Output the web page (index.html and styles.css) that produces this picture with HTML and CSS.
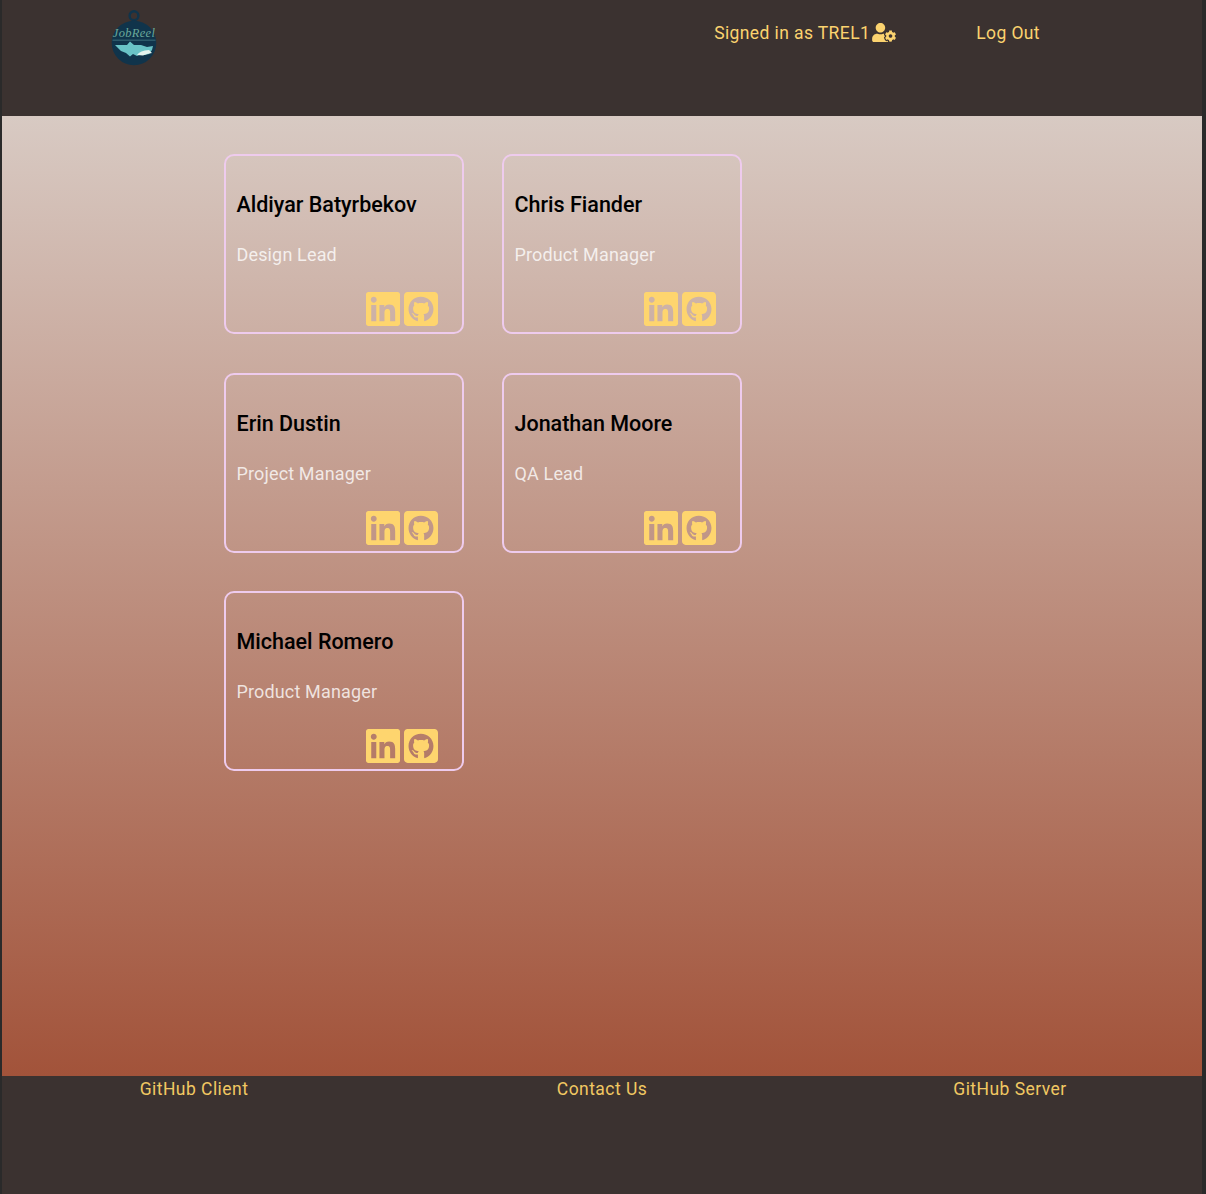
FILE: index.html
```html
<!DOCTYPE html>
<html lang="en">
<head>
<meta charset="utf-8">
<title>JobReel - Team</title>
<link rel="stylesheet" href="styles.css">
</head>
<body>
<svg class="defs" width="0" height="0">
    <symbol id="icon-linkedin" viewBox="0 32 448 448">
        <path d="M416 32H31.9C14.3 32 0 46.5 0 64.3v383.4C0 465.5 14.3 480 31.9 480H416c17.6 0 32-14.5 32-32.3V64.3c0-17.8-14.4-32.3-32-32.3zM135.4 416H69V202.2h66.5V416zm-33.2-243c-21.3 0-38.5-17.3-38.5-38.5S80.9 96 102.2 96c21.2 0 38.5 17.3 38.5 38.5 0 21.3-17.2 38.5-38.5 38.5zm282.1 243h-66.4V312c0-24.8-.5-56.7-34.5-56.7-34.6 0-39.9 27-39.9 54.9V416h-66.4V202.2h63.7v29.2h.9c8.9-16.8 30.6-34.5 62.9-34.5 67.2 0 79.7 44.3 79.7 101.9V416z"/>
    </symbol>
    <symbol id="icon-github" viewBox="0 32 448 448">
        <path d="M400 32H48C21.5 32 0 53.5 0 80v352c0 26.5 21.5 48 48 48h352c26.5 0 48-21.5 48-48V80c0-26.5-21.5-48-48-48zM277.3 415.7c-8.4 1.5-11.5-3.7-11.5-8 0-5.4.2-33 .2-55.3 0-15.6-5.2-25.5-11.3-30.7 37-4.1 76-9.2 76-73.1 0-18.2-6.5-27.3-17.1-39 1.7-4.3 7.4-22-1.7-45-13.9-4.3-45.7 17.9-45.7 17.9-13.2-3.7-27.5-5.6-41.6-5.6-14.1 0-28.4 1.9-41.6 5.6 0 0-31.8-22.2-45.7-17.9-9.1 22.9-3.5 40.6-1.7 45-10.6 11.7-15.6 20.8-15.6 39 0 63.6 37.3 69 74.3 73.1-4.8 4.3-9.1 11.7-10.6 22.3-9.5 4.3-33.8 11.7-48.3-13.9-9.1-15.8-25.5-17.1-25.5-17.1-16.2-.2-1.1 10.2-1.1 10.2 10.8 5 18.4 24.2 18.4 24.2 9.7 29.7 56.1 19.7 56.1 19.7 0 13.9.2 36.5.2 40.6 0 4.3-3 9.5-11.5 8-66-22.1-112.2-84.9-112.2-158.3 0-91.8 70.2-161.5 162-161.5S388 165.6 388 257.4c.1 73.4-44.7 136.3-110.7 158.3z"/>
    </symbol>
</svg>

<div class="page">
    <header class="topbar">
        <svg class="logo" width="46" height="56" viewBox="0 0 46 56">
            <circle class="logo-ring" cx="23" cy="5.700" r="4.400"/>
            <circle class="logo-ball" cx="23" cy="33" r="22.300"/>
            <text class="logo-text" x="23" y="26.500" text-anchor="middle">JobReel</text>
            <path class="logo-bar" d="M1.500 29.500h43v1.400h-43z"/>
            <path class="logo-shark" d="M4 35h12l3-3.500 4 3.500h7l6 2 6-1-1 4-3 4-4 1-4-1-4 2-4-2-3 2.500-4-3.500-5-2z"/>
            <path class="logo-wave" d="M26 45c2-3 6-4.500 12-5l3 3-5 1-4 1.500z"/>
        </svg>
        <nav class="topbar-links">
            <a class="signed-in">Signed in as TREL1
                <svg class="user-cog" width="24" height="19" viewBox="0 0 640 512"><path d="M610.5 373.300c2.600-14.100 2.600-28.500 0-42.600l25.800-14.900c3-1.700 4.300-5.200 3.300-8.500-6.700-21.600-18.200-41.200-33.200-57.400-2.300-2.500-6-3.100-9-1.400l-25.800 14.900c-10.900-9.300-23.400-16.500-36.900-21.300v-29.800c0-3.400-2.400-6.400-5.700-7.100-22.300-5-45-4.800-66.200 0-3.300.7-5.700 3.700-5.700 7.100v29.800c-13.500 4.800-26 12-36.900 21.300l-25.800-14.900c-2.900-1.700-6.700-1.100-9 1.400-15 16.200-26.500 35.800-33.200 57.400-1 3.300.4 6.800 3.300 8.500l25.800 14.900c-2.600 14.100-2.600 28.500 0 42.600l-25.800 14.900c-3 1.700-4.300 5.200-3.300 8.500 6.700 21.600 18.200 41.100 33.200 57.400 2.300 2.500 6 3.100 9 1.400l25.800-14.900c10.900 9.300 23.400 16.500 36.900 21.300v29.800c0 3.400 2.400 6.400 5.700 7.100 22.300 5 45 4.800 66.200 0 3.300-.7 5.700-3.700 5.700-7.100v-29.800c13.500-4.800 26-12 36.900-21.300l25.800 14.900c2.900 1.700 6.700 1.100 9-1.400 15-16.200 26.500-35.800 33.200-57.400 1-3.300-.4-6.800-3.300-8.500l-25.800-14.900zM496 400.500c-26.800 0-48.500-21.800-48.500-48.500s21.800-48.500 48.500-48.500 48.500 21.800 48.500 48.500-21.700 48.500-48.500 48.500zM224 256c70.700 0 128-57.300 128-128S294.700 0 224 0 96 57.300 96 128s57.300 128 128 128zm201.200 226.500c-2.300-1.200-4.600-2.600-6.800-3.900l-7.900 4.600c-6 3.400-12.800 5.300-19.600 5.300-10.900 0-21.400-4.600-28.900-12.600-18.300-19.800-32.300-43.900-40.200-69.600-5.500-17.700 1.900-36.400 17.900-45.700l7.900-4.600c-.1-2.600-.1-5.200 0-7.800l-7.900-4.600c-16-9.200-23.400-28-17.900-45.700.9-2.900 2.200-5.800 3.200-8.700-3.800-.3-7.500-1.200-11.400-1.200h-16.700c-22.200 10.200-46.900 16-72.900 16s-50.600-5.800-72.900-16h-16.700C60.200 288 0 348.200 0 422.400V464c0 26.500 21.500 48 48 48h352c10.100 0 19.500-3.200 27.200-8.500-1.200-3.800-2-7.700-2-11.800v-9.200z"/></svg>
            </a>
            <a class="logout">Log Out</a>
        </nav>
    </header>

    <main class="team">
        <div class="card">
            <h2 class="card-name">Aldiyar Batyrbekov</h2>
            <p class="card-role">Design Lead</p>
            <div class="card-icons">
                <svg class="card-icon"><use href="#icon-linkedin"/></svg>
                <svg class="card-icon"><use href="#icon-github"/></svg>
            </div>
        </div>
        <div class="card">
            <h2 class="card-name">Chris Fiander</h2>
            <p class="card-role">Product Manager</p>
            <div class="card-icons">
                <svg class="card-icon"><use href="#icon-linkedin"/></svg>
                <svg class="card-icon"><use href="#icon-github"/></svg>
            </div>
        </div>
        <div class="card">
            <h2 class="card-name">Erin Dustin</h2>
            <p class="card-role">Project Manager</p>
            <div class="card-icons">
                <svg class="card-icon"><use href="#icon-linkedin"/></svg>
                <svg class="card-icon"><use href="#icon-github"/></svg>
            </div>
        </div>
        <div class="card">
            <h2 class="card-name">Jonathan Moore</h2>
            <p class="card-role">QA Lead</p>
            <div class="card-icons">
                <svg class="card-icon"><use href="#icon-linkedin"/></svg>
                <svg class="card-icon"><use href="#icon-github"/></svg>
            </div>
        </div>
        <div class="card">
            <h2 class="card-name">Michael Romero</h2>
            <p class="card-role">Product Manager</p>
            <div class="card-icons">
                <svg class="card-icon"><use href="#icon-linkedin"/></svg>
                <svg class="card-icon"><use href="#icon-github"/></svg>
            </div>
        </div>
    </main>

    <footer class="footer">
        <a>GitHub Client</a>
        <a>Contact Us</a>
        <a>GitHub Server</a>
    </footer>
</div>
</body>
</html>
```

FILE: styles.css
```css
html, body {
    margin: 0;
    padding: 0;
}

body {
    background: #2a2a2a;
    font-family: Roboto, "Liberation Sans", sans-serif;
}

.defs {
    display: block;
    height: 0;
}

.page {
    width: 1200px;
    height: 1194px;
    margin-left: 2px;
    display: flex;
    flex-direction: column;
}

.topbar {
    height: 116px;
    box-sizing: border-box;
    background: #3b3230;
    display: flex;
    justify-content: space-between;
    padding: 10px 162px 0 109px;
}

.logo {
    display: block;
}

.topbar-links {
    display: flex;
    gap: 80px;
    padding-top: 12px;
    font-size: 17.500px;
    line-height: 22px;
    letter-spacing: 0.4px;
    color: #fbd36f;
}

.signed-in {
    display: flex;
    align-items: flex-start;
    gap: 2px;
}

.user-cog {
    fill: #fbd36f;
    margin-top: 1px;
}

.logo-ring {
    fill: none;
    stroke: #10344b;
    stroke-width: 2.400;
}

.logo-ball {
    fill: #10344b;
}

.logo-text {
    font-family: "Liberation Serif", serif;
    font-style: italic;
    font-size: 12.500px;
    letter-spacing: 0.3px;
    fill: #6aa89a;
}

.logo-bar {
    fill: #2c5a6a;
}

.logo-shark {
    fill: #69c3c6;
}

.logo-wave {
    fill: #e4f3ee;
}

.team {
    height: 960px;
    box-sizing: border-box;
    padding: 38px 0 0 222px;
    background: linear-gradient(#d8cac3, #a2533a);
    display: grid;
    grid-template-columns: 240px 240px;
    grid-auto-rows: 180px;
    column-gap: 38px;
    row-gap: 38.500px;
}

.card {
    box-sizing: border-box;
    border: 2px solid #eecbed;
    border-radius: 10px;
    padding: 0 24px 6px 10.500px;
    display: flex;
    flex-direction: column;
}

.card-name {
    margin: 35px 0 0;
    font-size: 21.500px;
    line-height: 28px;
    font-weight: 500;
    color: #000;
}

.card-role {
    margin: 25px 0 0;
    font-size: 18px;
    line-height: 22px;
    letter-spacing: 0.15px;
    color: rgba(255, 255, 255, 0.78);
}

.card-icons {
    margin-top: auto;
    display: flex;
    justify-content: flex-end;
    gap: 4.500px;
}

.card-icon {
    width: 34px;
    height: 34px;
    fill: #fed56e;
}

.footer {
    flex: 1;
    background: #3b3230;
    display: grid;
    grid-template-columns: 384px 432px 384px;
    justify-items: center;
    align-content: start;
    padding-top: 2px;
    font-size: 17.500px;
    line-height: 22px;
    letter-spacing: 0.45px;
    color: #f1c862;
}
```
